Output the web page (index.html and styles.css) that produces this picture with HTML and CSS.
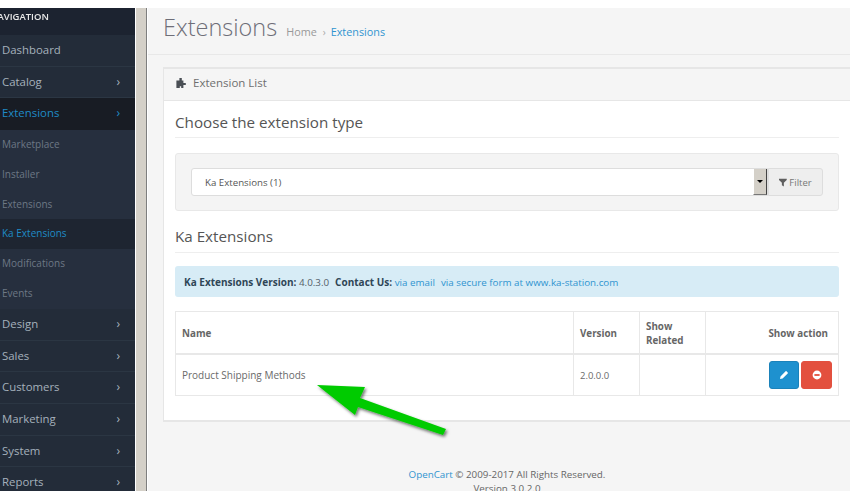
FILE: index.html
```html
<!DOCTYPE html>
<html lang="en">
<head>
<meta charset="utf-8">
<title>Extensions</title>
<link rel="stylesheet" href="styles.css">
</head>
<body>
<div class="app">
  <nav class="sidebar">
    <div class="nav-head"><span class="nav-head-text">NAVIGATION</span></div>
    <a class="nav-item">Dashboard</a>
    <a class="nav-item">Catalog<span class="chev">›</span></a>
    <a class="nav-item active">Extensions<span class="chev">›</span></a>
    <div class="subnav">
      <a class="sub-item">Marketplace</a>
      <a class="sub-item">Installer</a>
      <a class="sub-item">Extensions</a>
      <a class="sub-item current">Ka Extensions</a>
      <a class="sub-item">Modifications</a>
      <a class="sub-item">Events</a>
    </div>
    <a class="nav-item">Design<span class="chev">›</span></a>
    <a class="nav-item">Sales<span class="chev">›</span></a>
    <a class="nav-item">Customers<span class="chev">›</span></a>
    <a class="nav-item">Marketing<span class="chev">›</span></a>
    <a class="nav-item">System<span class="chev">›</span></a>
    <a class="nav-item">Reports<span class="chev">›</span></a>
  </nav>
  <div class="scrollbar"></div>
  <main class="content">
    <header class="page-header">
      <h1>Extensions</h1>
      <span class="crumb">Home</span><span class="crumb-sep">›</span><a class="crumb link">Extensions</a>
    </header>
    <section class="panel">
      <div class="panel-heading">
        <svg class="puzzle" viewBox="0 0 12 12" width="12" height="12"><path d="M4.4 1h2.4v2.4h1.6v2.7h2.4v2H8.4V11H6.2V9.2H4.8V11H1.4V3.4h3z" fill="#4a4f55"/></svg>
        <span>Extension List</span>
      </div>
      <div class="panel-body">
        <h2 class="legend">Choose the extension type</h2>
        <div class="well">
          <div class="select">
            <span class="select-text">Ka Extensions (1)</span>
            <span class="select-arrow"><i></i></span>
          </div>
          <button class="filter">
            <svg viewBox="0 0 10 10" width="9" height="9"><path d="M0 .8h8.6v1.4L5.4 5.2v4.2L3.2 8V5.2L0 2.2z" fill="#5f5f5f"/></svg>Filter
          </button>
        </div>
        <h2 class="legend second">Ka Extensions</h2>
        <div class="alert">
          <b>Ka Extensions Version:</b> 4.0.3.0<b class="contact">Contact Us:</b> <a>via email</a><a class="form-link">via secure form at www.ka-station.com</a>
        </div>
        <table class="table">
          <thead>
            <tr>
              <th class="c-name">Name</th>
              <th class="c-ver">Version</th>
              <th class="c-rel">Show Related</th>
              <th class="c-act">Show action</th>
            </tr>
          </thead>
          <tbody>
            <tr>
              <td>Product Shipping Methods</td>
              <td class="num">2.0.0.0</td>
              <td></td>
              <td class="actions">
                <span class="btn blue"><svg viewBox="0 0 10 10" width="10" height="10"><path d="M1 9l.5-2.6L6.6 1.3a.6.6 0 0 1 .9 0l1.2 1.2a.6.6 0 0 1 0 .9L3.6 8.5z" fill="#fff"/></svg></span>
                <span class="btn red"><svg viewBox="0 0 10 10" width="10" height="10"><circle cx="5" cy="5" r="4.4" fill="#fff"/><rect x="2.4" y="4.1" width="5.2" height="1.8" fill="#e3503e"/></svg></span>
              </td>
            </tr>
          </tbody>
        </table>
      </div>
    </section>
    <footer class="footer"><a>OpenCart</a> © 2009-2017 All Rights Reserved.<br>Version 3.0.2.0</footer>
  </main>
</div>
<svg class="arrow" viewBox="0 0 140 70" width="140" height="70">
  <defs><filter id="sh" x="-20%" y="-20%" width="140%" height="140%"><feDropShadow dx="1.5" dy="2" stdDeviation="1.4" flood-color="#000" flood-opacity=".55"/></filter></defs>
  <path d="M6 7 L54 9 L49 20 L135 51 L132 57 L47 29 L44 37 Z" fill="#00cb00" filter="url(#sh)"/>
</svg>
</body>
</html>
```
FILE: styles.css
```css
html, body { margin: 0; padding: 0; background: #fff; }
body { padding: 8px 0 9px; height: 483px; overflow: hidden; position: relative; font-family: "Open Sans", sans-serif; font-size: 10px; color: #666; }
.app { display: flex; height: 483px; overflow: hidden; filter: blur(.35px); }
a { color: #2f94d0; }

.sidebar { width: 135px; flex: none; background: #232d3a; overflow: hidden; display: flex; flex-direction: column; }
.nav-head { height: 27px; flex: none; background: #1c2330; color: #e8e8e8; font-size: 9.5px; font-weight: 600; line-height: 17px; overflow: hidden; position: relative; }
.nav-head-text { position: absolute; left: -10px; top: 0; }
.nav-item { display: flex; justify-content: space-between; height: 31.7px; flex: none; box-sizing: border-box; padding: 0 15px 0 2px; line-height: 29.5px; font-size: 11.4px; color: #a5b1bc; border-bottom: 1px solid #2b3643; background: #232c39; }
.nav-item.active { background: #181c24; color: #1f8bc6; border-bottom-color: #181c24; }
.chev { font-size: 12px; }
.subnav { background: #262f3e; flex: none; }
.sub-item { display: block; height: 29.8px; line-height: 28px; padding-left: 2px; font-size: 10px; color: #6d7885; }
.sub-item.current { background: #1e2531; color: #1f8bc6; }

.scrollbar { width: 10px; flex: none; margin-left: 1px; background: #d4d0c8; border-right: 1px solid #7e7e7e; margin-right: 1px; }

.content { flex: 1; min-width: 0; background: #f5f5f5; overflow: hidden; }
.page-header { height: 47px; box-sizing: border-box; border-bottom: 1px solid #e8e8e8; padding-left: 15px; display: flex; align-items: baseline; line-height: 39px; }
.page-header h1 { margin: 0 9px 0 0; font-size: 23.5px; font-weight: 300; color: #6e6e78; }
.crumb { font-size: 10.8px; color: #999; }
.crumb-sep { font-size: 10px; color: #aaa; margin: 0 5px 0 6px; }
.crumb.link { color: #2f94d0; }

.panel { margin: 12px 0 0 15px; width: 687px; height: 355px; box-sizing: border-box; background: #fff; border: 1px solid #e6e6e6; border-bottom-width: 2px; border-right: 0; border-top-width: 2px; }
.panel-heading { height: 32px; box-sizing: border-box; background: #f5f5f5; border-bottom: 1px solid #e6e6e6; display: flex; align-items: center; gap: 6px; padding: 0 0 4px 11px; font-size: 11.5px; color: #6f6f6f; }
.panel-body { padding: 0 11px 0 11px; }
.legend { margin: 0; font-size: 15.2px; font-weight: 400; color: #555; line-height: 20px; padding: 11px 0 5px; border-bottom: 1px solid #eee; }
.legend.second { padding-top: 15px; padding-bottom: 6px; }

.well { height: 58px; box-sizing: border-box; margin-top: 15px; background: #f4f4f4; border: 1px solid #e8e8e8; border-radius: 3px; display: flex; align-items: center; padding: 0 15px; }
.select { flex: 1; height: 28px; box-sizing: border-box; background: #fff; border: 1px solid #ddd; border-radius: 3px 0 0 3px; display: flex; justify-content: space-between; align-items: stretch; }
.select-text { padding-left: 13px; line-height: 28px; font-size: 9.7px; color: #555; }
.select-arrow { width: 12px; background: #d4d0c8; border-left: 1px solid #fff; border-right: 1px solid #444; border-bottom: 1px solid #777; display: flex; align-items: center; justify-content: center; }
.select-arrow i { border: 3px solid transparent; border-top: 3px solid #000; border-bottom: 0; }
.filter { height: 28px; width: 55px; box-sizing: border-box; background: #eee; border: 1px solid #ddd; border-radius: 0 3px 3px 0; font: 9.5px "Open Sans", sans-serif; color: #777; display: flex; align-items: center; justify-content: center; gap: 1px; padding: 0; }

.alert { margin-top: 13px; height: 31px; box-sizing: border-box; background: #d7ecf6; border-radius: 3px; padding-left: 9px; line-height: 32px; font-size: 9.8px; color: #55606a; }
.alert b { color: #2f4656; font-size: 10px; }
.alert a { color: #2f94d0; }
.alert .contact { margin-left: 6px; }
.alert .form-link { margin-left: 6px; }

.table { margin-top: 14px; width: 100%; border-collapse: collapse; font-size: 10px; color: #6a6a6a; table-layout: fixed; }
.table th, .table td { border: 1px solid #e8e8e8; padding: 0 6px; }
.table th { height: 42px; text-align: left; font-size: 9.8px; font-weight: 700; line-height: 14px; color: #666; border-bottom-width: 2px; padding-top: 4px; box-sizing: border-box; }
.table td { height: 42px; padding-top: 1px; box-sizing: border-box; }
.table td.num { font-size: 9.5px; }
.c-ver { width: 66px; }
.c-rel { width: 66px; }
.c-act { width: 133px; text-align: right !important; padding-right: 10px !important; }
.actions { text-align: right; padding-right: 6px !important; white-space: nowrap; font-size: 0; }
.btn { display: inline-flex; width: 30px; height: 28px; border-radius: 3px; align-items: center; justify-content: center; vertical-align: middle; box-sizing: border-box; }
.btn + .btn { margin-left: 2px; }
.blue { background: #1e91cf; border: 1px solid #1b82ba; }
.red { background: #e3503e; border: 1px solid #e2503f; width: 31px; }

.footer { text-align: center; margin-top: 46px; padding-left: 16px; font-size: 9.8px; line-height: 14px; color: #666; }
.footer a { color: #2f94d0; }

.arrow { position: absolute; left: 311px; top: 378px; filter: blur(.3px); }
```
